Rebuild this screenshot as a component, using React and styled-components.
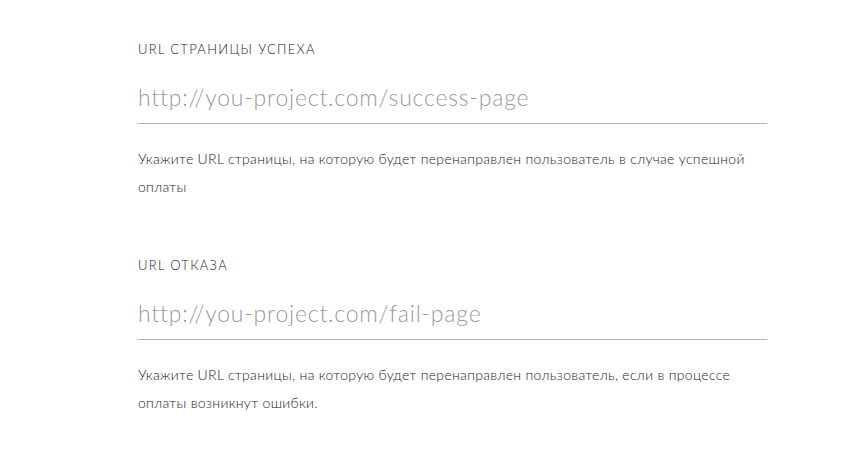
import React from 'react';
import styled, { createGlobalStyle } from 'styled-components';

const GlobalStyle = createGlobalStyle`
    body {
        margin: 0;
        background: #fff;
        font-family: Lato, "Liberation Sans", sans-serif;
    }
`;

const fields = [
    {
        label: 'URL страницы успеха',
        placeholder: 'http://you-project.com/success-page',
        hint: 'Укажите URL страницы, на которую будет перенаправлен пользователь в случае успешной оплаты',
    },
    {
        label: 'URL отказа',
        placeholder: 'http://you-project.com/fail-page',
        hint: 'Укажите URL страницы, на которую будет перенаправлен пользователь, если в процессе оплаты возникнут ошибки.',
    },
];

const App = () => {
    return (
        <>
            <GlobalStyle />
            <Form>
                {fields.map((f) => (
                    <Field key={f.label}>
                        <Label>{f.label}</Label>
                        <Input type="text" placeholder={f.placeholder} />
                        <Hint>{f.hint}</Hint>
                    </Field>
                ))}
            </Form>
        </>
    );
};

export default App;

const Form = styled.form`
    width: 629px;
    padding: 40px 0 0 138px;
    display: flex;
    flex-direction: column;
    gap: 55px;
`;

const Field = styled.div`
    display: flex;
    flex-direction: column;
`;

const Label = styled.label`
    font-size: 13px;
    font-weight: 300;
    line-height: 18px;
    text-transform: uppercase;
    letter-spacing: 1.3px;
    color: #222;
`;

const Input = styled.input`
    margin-top: 24px;
    border: 0;
    border-bottom: 1px solid #b5b5b5;
    padding: 0 0 11px;
    font-family: inherit;
    font-weight: 300;
    font-size: 23px;
    letter-spacing: 0.8px;
    line-height: 30px;
    color: #333;
    outline: none;
    background: transparent;

    &::placeholder {
        color: #999;
    }
`;

const Hint = styled.p`
    margin: 21px 0 0;
    font-size: 14px;
    font-weight: 300;
    letter-spacing: 0.3px;
    line-height: 28px;
    color: #222;
`;
